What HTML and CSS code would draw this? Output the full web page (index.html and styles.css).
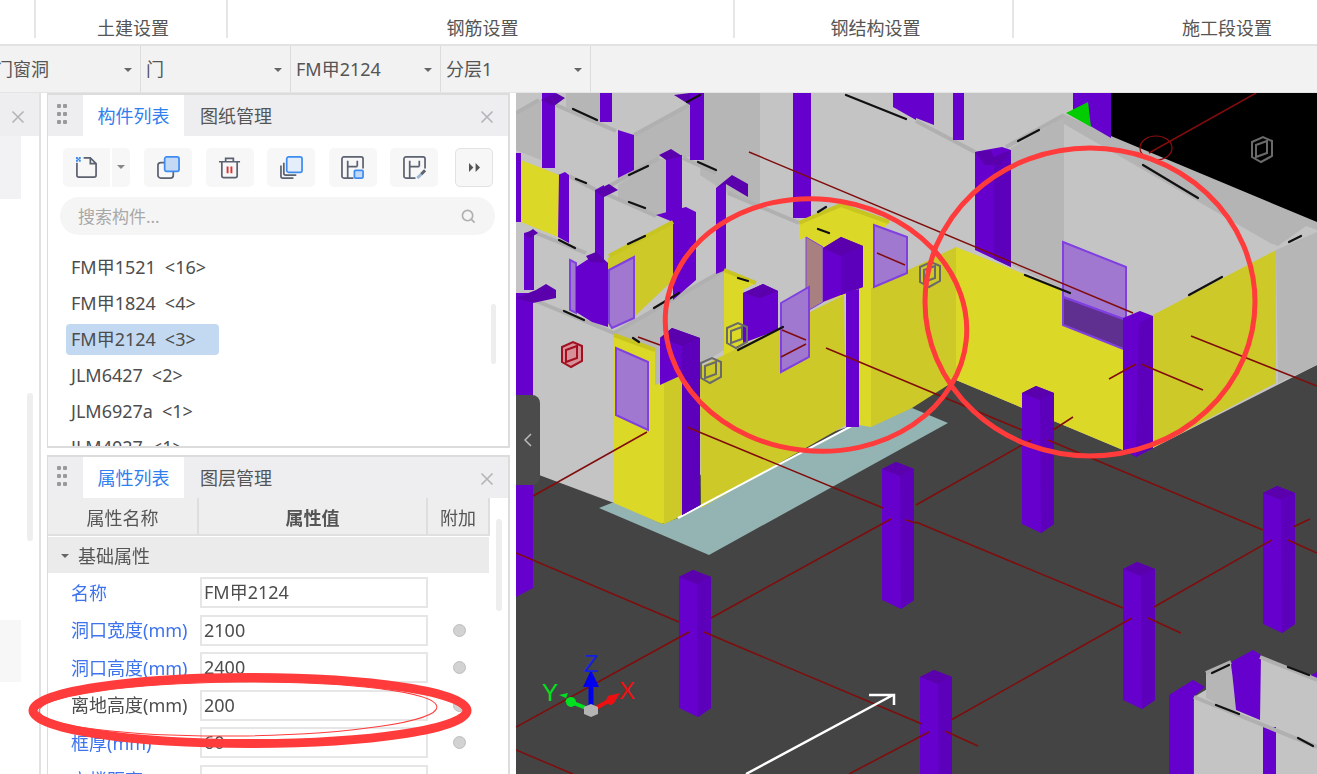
FILE: index.html
```html
<!DOCTYPE html>
<html lang="zh">
<head>
<meta charset="utf-8">
<title>门窗洞属性</title>
<link rel="stylesheet" href="styles.css">
</head>
<body>
<div class="app">
  <header class="ribbon">
    <div class="group g0"></div>
    <div class="group g1"><span>土建设置</span></div>
    <div class="group g2"><span>钢筋设置</span></div>
    <div class="group g3"><span>钢结构设置</span></div>
    <div class="group g4"><span>施工段设置</span></div>
  </header>
  <nav class="pickers">
    <div class="picker first"><span>门窗洞</span><i class="caret"></i></div>
    <div class="picker"><span>门</span><i class="caret"></i></div>
    <div class="picker"><span>FM甲2124</span><i class="caret"></i></div>
    <div class="picker"><span>分层1</span><i class="caret"></i></div>
  </nav>
  <main class="work">
    <aside class="stub">
      <div class="stub-head"><svg class="close" viewBox="0 0 14 14"><path d="M1.5 1.5l11 11M12.500 1.500l-11 11"/></svg></div>
      <div class="stub-body">
        <div class="stub-block one"></div>
        <div class="stub-scroll"></div>
        <div class="stub-block two"></div>
      </div>
    </aside>
    <section class="panels">
      <div class="panel list-panel">
        <div class="tabs">
          <div class="grip"><b></b><b></b><b></b><b></b><b></b><b></b></div>
          <div class="tab active">构件列表</div>
          <div class="tab">图纸管理</div>
          <svg class="close" viewBox="0 0 14 14"><path d="M1.5 1.5l11 11M12.500 1.500l-11 11"/></svg>
        </div>
        <div class="tools">
          <div class="split">
            <button class="tool main">
              <svg viewBox="0 0 24 24"><path class="ln" d="M2 7v13a2 2 0 0 0 2 2h16a2 2 0 0 0 2-2V8l-6-6H9M16 2v6h6"/><path class="bl" d="M1 1h2v2H1zM4 1h2v2H4zM1 4h2v2H1zM4 4h2v2H4zM2.500 2.500h2v2h-2z"/></svg>
            </button>
            <button class="tool drop"><i class="caret"></i></button>
          </div>
          <button class="tool">
            <svg viewBox="0 0 24 24"><rect class="ln" x="1" y="7" width="16" height="16" rx="3"/><rect class="fillb" x="8" y="1" width="15" height="15" rx="2"/></svg>
          </button>
          <button class="tool">
            <svg viewBox="0 0 24 24"><path class="ln" d="M1 6h22M8 6V2.500h8V6M4 6v14.500a2 2 0 0 0 2 2h12a2 2 0 0 0 2-2V6"/><path class="rd" d="M10 11v7M14 11v7"/></svg>
          </button>
          <button class="tool">
            <svg viewBox="0 0 24 24"><path class="ln" d="M1 10v11a2 2 0 0 0 2 2h11M4 7v11a2 2 0 0 0 2 2h11"/><rect class="filll" x="7" y="1" width="16" height="16" rx="2"/></svg>
          </button>
          <button class="tool">
            <svg viewBox="0 0 24 24"><path class="ln" d="M13 23H3a2 2 0 0 1-2-2V3a2 2 0 0 1 2-2h18a2 2 0 0 1 2 2v10M7 23V5M7 11h10M17 5v6"/><rect class="fillb" x="14" y="15" width="9" height="8" rx="1"/></svg>
          </button>
          <button class="tool">
            <svg viewBox="0 0 24 24"><path class="ln" d="M13 23H3a2 2 0 0 1-2-2V3a2 2 0 0 1 2-2h18a2 2 0 0 1 2 2v10M7 23V5M7 11h10M17 5v6"/><path class="pen" d="M15 23l4-4"/><path class="pendk" d="M19 19l4-4"/></svg>
          </button>
          <button class="tool more">
            <svg viewBox="0 0 10 8"><path class="solid" d="M0 0l4 4-4 4zM6 0l4 4-4 4z"/></svg>
          </button>
        </div>
        <div class="search">
          <span>搜索构件...</span>
          <svg viewBox="0 0 16 16"><circle cx="7" cy="7" r="5.500"/><path d="M11 11l3.500 3.500"/></svg>
        </div>
        <ul class="items">
          <li><span class="item">FM甲1521<em>&lt;16&gt;</em></span></li>
          <li><span class="item">FM甲1824<em>&lt;4&gt;</em></span></li>
          <li><span class="item sel">FM甲2124<em>&lt;3&gt;</em></span></li>
          <li><span class="item">JLM6427<em>&lt;2&gt;</em></span></li>
          <li><span class="item">JLM6927a<em>&lt;1&gt;</em></span></li>
          <li><span class="item">JLM4027<em>&lt;1&gt;</em></span></li>
        </ul>
        <div class="list-scroll"></div>
      </div>
      <div class="panel prop-panel">
        <div class="tabs">
          <div class="grip"><b></b><b></b><b></b><b></b><b></b><b></b></div>
          <div class="tab active">属性列表</div>
          <div class="tab">图层管理</div>
          <svg class="close" viewBox="0 0 14 14"><path d="M1.5 1.5l11 11M12.500 1.500l-11 11"/></svg>
        </div>
        <div class="thead">
          <div class="th c1">属性名称</div>
          <div class="th c2">属性值</div>
          <div class="th c3">附加</div>
        </div>
        <div class="grouprow"><i class="caret"></i>基础属性</div>
        <div class="row"><label class="blue">名称</label><div class="val">FM甲2124</div></div>
        <div class="row"><label class="blue">洞口宽度(mm)</label><div class="val">2100</div><i class="dot"></i></div>
        <div class="row"><label class="blue">洞口高度(mm)</label><div class="val">2400</div><i class="dot"></i></div>
        <div class="row"><label>离地高度(mm)</label><div class="val">200</div><i class="dot"></i></div>
        <div class="row"><label class="blue">框厚(mm)</label><div class="val">60</div><i class="dot"></i></div>
        <div class="row"><label class="blue">立樘距离(mm)</label><div class="val">0</div><i class="dot"></i></div>
        <div class="prop-scroll"></div>
      </div>
    </section>
    <section class="view">
      <svg class="scene" viewBox="516 93 801 681" width="801" height="681">
        <defs>
          <g id="post">
            <path class="pf" d="M0 7L14 0 32 7V138L19 147 0 138z"/>
            <path class="pr" d="M18 14L32 7V138L19 147z"/>
            <path class="pt" d="M0 7L14 0 32 7 18 14z"/>
          </g>
          <g id="frame">
            <path d="M0 5L11 0 20 4V19L9 25 0 20zM4 8L15 4V16L4 20z"/>
          </g>
        </defs>
        <rect class="floor" x="516" y="93" width="801" height="681"/>
        <path class="night" d="M1100 93H1317V232L1100 138z"/>
        <path class="wall" d="M516 93H1111V138L1317 225V365L1153 448 1123 450 956 380 900 410 614 503 539 475 516 465z"/>
        <path class="slab" d="M599 508L614 502 662 524 678 518 859 422 912 408 948 423 709 555z"/>

        <path class="shade" d="M516 113L541 100V160L516 150zM566 93H600V122L566 107zM634 135L693 100V157H659L630 173zM618 185L659 158 666 160V216H656L618 199zM614 332L724 270V350L700 365 660 395 614 370zM704 93H760V207L727 193 700 175zM1011 148L1064 117V290L1011 265zM1276 250L1317 232V365L1278 383z"/>
        <path class="caps" d="M516 113L539 100M556 105L616 131M634 135L689 105M606 188L659 158M683 158L716 173M569 176L596 190M604 193L656 216M536 233L586 253M534 300L614 333 724 270M728 193L799 223M916 121L975 152M1006 147L1064 115"/>
        <path class="capfill" d="M1064 114L1111 136 1317 222V230L1306 226 1278 246 1270 243 1064 124z"/>

        <path class="p" d="M542 93H555V168H542zM600 93H612V122H600zM690 93H704V160H690zM793 93H811V218H793zM893 93H916V120L893 107zM916 93H934V125L916 118zM953 93H964V140H953zM1073 93H1111V138L1092 127 1073 110zM516 153H521V222H516zM558 175L565 172 569 175V243L558 237zM595 190L604 185V262H595zM666 155H682V215H666zM716 188L726 182V270L716 274zM524 233L534 230V290L524 290zM618 130L634 135V170L618 178z"/>
        <path class="pt" d="M541 100L556 93 565 98 554 106zM595 191L609 184 618 190 604 197zM659 155L671 149 682 156 666 160zM716 188L732 175 748 184 748 197 726 184zM674 95L690 93 690 105zM524 235L533 229 538 233 530 238z"/>
        <path class="pf" d="M656 215L686 207 696 212V280L673 300V222z"/>

        <path class="yl" d="M521 160L559 175 558 237 521 222z"/>
        <path class="yd" d="M608 258L673 222V280L634 317 608 325z"/>
        <path class="yl" d="M724 270L756 283 743 290V343L724 357z"/>
        <path class="yd" d="M700 367L844 295 846 425 701 508z"/>
        <path class="yl" d="M799 223L841 205 889 222 884 228 873 225V287L859 290V427L846 427 845 295 823 302V248L806 237 799 240z"/>
        <path class="yl" d="M859 290L871 287V427L859 425z"/>
        <path class="yd" d="M871 288L956 247V380L912 408 871 427z"/>
        <path class="yl" d="M956 247L1123 313V450L956 380z"/>
        <path class="yd" d="M1153 315L1276 250V383L1153 448z"/>
        <path class="yl" d="M614 335L655 350V385L680 375V516L662 524 614 503z"/>
        <path class="yd" d="M664 382L682 375V516L664 524z"/>
        <path class="ycap" d="M614 335L655 350M799 223L841 205 889 222M609 256L673 222M724 270L756 283"/>

        <path class="white" d="M678 518L859 422"/>

        <path class="pink" d="M806 237L823 247V302L809 310V287L806 290z"/>
        <path class="door" d="M616 348L648 362V430L616 415zM781 303L809 287V357L781 372zM874 225L907 237V273L874 287zM609 270L634 257V318L612 328 609 323zM570 260L576 263V313L570 310z"/>
        <path class="door" d="M1063 242L1126 267V320L1063 297z"/>
        <path class="doorlow" d="M1063 297L1126 320V350L1063 325z"/>

        <path class="pf" d="M576 267L590 258 608 263V327L592 322 576 312z"/>
        <path class="pt" d="M586 256L596 252 608 263 590 262z"/>
        <path class="pf" d="M743 293L763 284 778 291V330L743 343z"/>
        <path class="pt" d="M743 293L763 284 778 291 760 298z"/>
        <path class="pf" d="M823 248L841 237 863 246V287L841 295 823 302z"/>
        <path class="pr" d="M841 256L863 246V287L841 295z"/>
        <path class="pt" d="M823 248L841 237 863 246 841 256z"/>
        <path class="p" d="M846 292L859 289V427L846 427z"/>
        <path class="pf" d="M660 338L672 328 700 338V505L682 515V375L660 385z"/>
        <path class="pr" d="M682 346L700 338V505L682 515z"/>
        <path class="pt" d="M660 338L672 328 700 338 682 346z"/>
        <path class="pf" d="M975 152L985 150 1002 147 1011 150V267L975 250z"/>
        <path class="pr" d="M994 157L1011 150V267L994 259z"/>
        <path class="pt" d="M975 152L990 150 994 157 1011 150 1000 165 985 165z"/>
        <path class="pf" d="M1123 318L1140 311 1153 316V448L1136 457 1123 450z"/>
        <path class="pr" d="M1139 323L1153 316V448L1136 457z"/>
        <path class="pf" d="M516 293L533 293V588L516 597z"/>
        <path class="pt" d="M516 298L536 290 546 284 556 290V298L533 303z"/>
        <path class="green" d="M1066 113L1088 102 1091 127z"/>

        <use href="#post" x="679" y="570"/>
        <use href="#post" x="882" y="462"/>
        <use href="#post" x="1022" y="386"/>
        <use href="#post" x="1263" y="486"/>
        <use href="#post" x="1123" y="562"/>
        <use href="#post" x="920" y="670"/>

        <path class="wall" d="M1194 697L1260 657 1317 677V774H1194z"/>
        <path class="shade" d="M1206 673L1231 662 1236 713 1206 698z"/>
        <path class="p" d="M1231 662L1253 650 1261 655 1260 720 1236 710zM1169 695L1193 680 1205 687 1193 697V774H1169zM1263 727H1276V774H1263zM1308 677L1317 672V680z"/>
        <path class="caps" d="M1194 697L1317 747M1260 657L1317 680M1206 673L1231 662"/>

        <g class="frame-g"><use href="#frame" x="701" y="358"/><use href="#frame" x="727" y="323"/><use href="#frame" x="920" y="262"/><use href="#frame" x="1252" y="137"/></g>
        <g class="frame-r"><use href="#frame" x="562" y="342"/></g>

        <path class="dash" d="M573 109L597 120M629 175L648 166M698 162L716 170M629 202L645 208M559 240L575 248M576 179L586 183M628 244L645 236M564 311L584 320M654 308L679 293M738 278L748 281M633 338L639 342M738 350L783 327M818 212L826 207M818 229L829 233M846 95L906 119M687 102L700 95M1018 141L1039 130M1143 165L1198 198M1025 275L1070 293M1189 295L1222 277M1289 242L1301 236M1212 673L1229 665M1216 705L1239 714M1288 667L1309 675M1298 738L1313 746"/>

        <path class="red" d="M749 152L1133 313M1256 93L1149 153M1191 336L1317 386M1109 379L1136 364M1141 364L1203 390M826 348L1022 430M1048 440L1263 530M1288 540L1317 553M916 505L1031 440M1053 430L1073 417M516 727L689 632M711 618L891 519M516 553L679 622M704 632L922 724M945 731L978 746M916 522L1123 608M1148 618L1181 633M1154 607L1272 540M1293 527L1310 519M1132 618L951 720M929 732L849 774M687 427L883 508M906 520L916 523M533 496L647 432M516 750L573 774M782 330L806 340M781 357L806 344M877 253L905 265M638 337L660 345"/>
        <ellipse class="redthin" cx="1156" cy="148" rx="16" ry="12"/>

        <path class="arrow" d="M746 774L893 695M869 695H894V705"/>

        <g class="gizmo">
          <path class="axg" d="M586 708L566 700"/>
          <path class="gh" d="M566 698L559 695 568 693zM571 707a5 5 0 1 1 0-10 5 5 0 0 1 0 10z"/>
          <path class="axr" d="M596 708L612 699"/>
          <path class="rh" d="M611 705a5 5 0 1 1 1-10l8-2-6 10z"/>
          <path class="axb" d="M591 706V682"/>
          <path class="bh" d="M591 670L599 687H583z"/>
          <path class="cube" d="M584 707L591 704 598 707V714L591 717 584 714z"/>
          <text class="z" x="591" y="672">Z</text>
          <text class="y" x="550" y="701">Y</text>
          <text class="x" x="627" y="699">X</text>
        </g>
      </svg>
      <div class="fold"><svg viewBox="0 0 8 14"><path d="M7 1L1 7l6 6"/></svg></div>
    </section>
  </main>
  <svg class="marks" viewBox="0 0 1317 774" width="1317" height="774">
    <ellipse class="mark" cx="816" cy="325" rx="151" ry="126" transform="rotate(6 816 325)"/>
    <ellipse class="mark" cx="1090" cy="302" rx="165" ry="154"/>
    <ellipse class="mark wide" cx="250" cy="710.500" rx="217" ry="33"/>
    <ellipse class="mark thin" cx="238" cy="709" rx="199" ry="27"/>
  </svg>
</div>
</body>
</html>
```
FILE: styles.css
```css
* { box-sizing: border-box; }
html, body { margin: 0; padding: 0; background: #fff; }
body {
  width: 1317px; height: 774px; overflow: hidden;
  font: 18px/1 "Noto Sans", "Noto Sans CJK SC", sans-serif;
  color: #4d4d4d;
}
.app { position: relative; width: 1317px; height: 774px; overflow: hidden; filter: blur(.45px); }

.ribbon { display: flex; height: 46px; border-bottom: 2px solid #e2e2e2; background: #fff; }
.group { position: relative; flex: none; height: 44px; padding: 19px 0 0 2px; text-align: center; white-space: nowrap; color: #555; }
.group::after { content: ""; position: absolute; right: 0; top: 0; height: 38px; width: 2px; background: #e6e6e6; }
.g0 { width: 36px; }
.g1 { width: 192px; }
.g2 { width: 507px; }
.g3 { width: 279px; }
.g4 { width: 424px; }

.pickers { display: flex; height: 47px; background: #f2f2f2; border-bottom: 1px solid #e4e4e4; }
.picker { position: relative; flex: none; width: 150px; height: 46px; padding: 14px 0 0 5px; border-right: 1px solid #dcdcdc; color: #555; }
.picker.first { width: 141px; padding-left: 0; }
.picker.first span { margin-left: -5px; }
.picker .caret { position: absolute; right: 8px; top: 22px; }
.caret { display: inline-block; width: 0; height: 0; border: 4px solid transparent; border-top: 4px solid #666; border-bottom: 0; }

.work { display: flex; height: 681px; }
.stub { flex: none; width: 41px; border-right: 2px solid #e2e2e2; }
.stub-head { height: 43px; background: #eeeef0; padding: 15px 0 0 11px; }
.stub-head .close { position: static; }
.stub-body { position: relative; height: 638px; background: #fff; }
.stub-block { width: 21px; }
.stub-block.one { height: 63px; background: #f2f2f5; }
.stub-block.two { height: 62px; background: #f7f7f7; margin-top: 421px; }
.stub-scroll { position: absolute; left: 27px; top: 257px; width: 6px; height: 148px; background: #eee; border-radius: 3px; }
.close { position: absolute; right: 14px; top: 15px; width: 14px; height: 14px; }
.close path { fill: none; stroke: #b4b4b8; stroke-width: 1.6; }

.panels { flex: none; width: 463px; margin: 0 6px 0 6px; display: flex; flex-direction: column; gap: 7px; }
.panel { position: relative; border: solid #dcdcdc; border-width: 2px 2px 2px 1px; background: #fff; overflow: hidden; }
.list-panel { height: 355px; flex: none; }
.prop-panel { flex: 1; border-bottom: 0; }

.tabs { position: relative; display: flex; height: 41px; background: #eeeef0; }
.grip { width: 35px; padding: 9px 0 0 9px; display: grid; grid-template-columns: 4px 4px; gap: 4px 2px; align-content: start; }
.grip b { width: 4px; height: 4px; background: #9a9a9a; border-radius: 1px; }
.tab { width: 101px; height: 41px; padding-top: 12px; text-align: center; color: #555; }
.tab.active { background: #fff; color: #2f7fee; }
.tab + .tab { width: 104px; }

.tools { display: flex; align-items: center; gap: 13.500px; height: 52px; padding: 10px 0 0 15px; }
.tool { flex: none; width: 48px; height: 39px; padding: 0; border: 0; border-radius: 5px; background: #f7f7f7; display: flex; align-items: center; justify-content: center; }
.tool svg { width: 23px; height: 23px; }
.split { display: flex; gap: 2px; flex: none; margin-right: .5px; }
.tool.main { width: 47px; border-radius: 5px 0 0 5px; }
.tool.drop { width: 18px; border-radius: 0 5px 5px 0; }
.tool.drop .caret { border-top-color: #888; }
.tool.more { width: 38px; margin-left: 3.500px; border: 1px solid #e2e2e2; }
.tool.more svg { width: 11px; height: 9px; }
.ln { fill: none; stroke: #5c6270; stroke-width: 1.800; }
.bl { fill: #3f8cf0; }
.rd { fill: none; stroke: #e03030; stroke-width: 2; }
.fillb { fill: #c4d9f4; stroke: #3f8cf0; stroke-width: 1.800; }
.filll { fill: #e4eefb; stroke: #3f8cf0; stroke-width: 1.800; }
.pen { fill: none; stroke: #9ab4d8; stroke-width: 3; }
.pendk { fill: none; stroke: #5c6270; stroke-width: 3; }
.solid { fill: #555; }

.search { position: relative; display: flex; align-items: center; height: 38px; margin: 9px 13px 0 12px; padding-left: 18px; border-radius: 19px; background: #f5f5f5; color: #a8a8a8; font-size: 17px; }
.search svg { position: absolute; right: 19px; top: 12px; width: 15px; height: 15px; fill: none; stroke: #b0b0b0; stroke-width: 1.800; }

.items { list-style: none; margin: 0; padding: 14px 0 0 18px; }
.items li { height: 36px; display: flex; align-items: center; }
.item { display: inline-block; height: 31px; line-height: 31px; padding: 0 0 0 5px; border-radius: 4px; white-space: nowrap; color: #4d4d4d; }
.item em { font-style: normal; margin-left: 9px; }
.item.sel { width: 153px; background: #c2d9f1; }
.list-scroll { position: absolute; left: 443px; top: 209px; width: 5px; height: 60px; background: #eee; border-radius: 3px; }

.thead { display: flex; height: 38px; background: #eee; width: 442px; border-bottom: 2px solid #e0e0e0; }
.th { padding-top: 11px; text-align: center; color: #555; border-right: 2px solid #dedede; }
.th.c1 { width: 151px; }
.th.c2 { width: 229px; font-weight: 700; }
.th.c3 { width: 62px; }
.grouprow { display: flex; align-items: center; gap: 9px; width: 441px; height: 36px; margin-top: 1px; padding: 2px 0 0 13px; background: #ebebeb; color: #555; }
.row { position: relative; display: flex; align-items: center; height: 37.500px; padding-left: 23px; }
.grouprow + .row { margin-top: 1px; }
.row label { width: 129px; white-space: nowrap; color: #4d4d4d; }
.row label.blue { color: #3d73ee; }
.val { width: 228px; height: 31px; padding: 2px 0 0 2px; border: 2px solid #e6e6e6; background: #fff; line-height: 22px; color: #4d4d4d; }
.dot { position: absolute; left: 405px; top: 12px; width: 13px; height: 13px; border-radius: 50%; background: #d2d2d2; border: 1px solid #bdbdbd; }
.prop-scroll { position: absolute; left: 448px; top: 62px; width: 6px; height: 92px; background: #eee; border-radius: 3px; }

.view { position: relative; flex: none; width: 801px; height: 681px; overflow: hidden; }
.scene { display: block; }
.fold { position: absolute; left: 0; top: 302px; width: 24px; height: 90px; background: #4b4b4b; border-radius: 0 8px 8px 0; display: flex; align-items: center; justify-content: center; }
.fold svg { width: 8px; height: 14px; fill: none; stroke: #bbb; stroke-width: 1.500; }

.floor { fill: #444; }
.night { fill: #000; }
.wall { fill: #c4c4c4; }
.shade { fill: #b6b6b6; }
.slab { fill: #94b4b4; }
.caps { fill: none; stroke: #b0b0b0; stroke-width: 4; }
.capfill { fill: #b4b4b4; }
.p, .pf { fill: #6600cc; }
.pr { fill: #5c00bb; }
.pt { fill: #5a00ad; }
.yl { fill: #dcd828; }
.yd { fill: #cdc928; }
.ycap { fill: none; stroke: #c8c420; stroke-width: 4; }
.white { fill: none; stroke: #fff; stroke-width: 2; }
.door { fill: #a078d0; stroke: #8040e0; stroke-width: 2; }
.doorlow { fill: #603090; stroke: #8040e0; stroke-width: 2; }
.pink { fill: #a88080; stroke: #8040e0; stroke-width: 1; }
.green { fill: #00cc00; }
.frame-g { fill: none; stroke: #6a6a6a; stroke-width: 2; }
.frame-r { fill: #d89098; stroke: #a01020; stroke-width: 2; }
.dash { fill: none; stroke: #111; stroke-width: 2.200; stroke-linecap: round; }
.red { fill: none; stroke: #800c0c; stroke-width: 1.500; }
.redthin { fill: none; stroke: #900c0c; stroke-width: 1.200; }
.arrow { fill: none; stroke: #fff; stroke-width: 2.500; }
.axg { stroke: #00e020; stroke-width: 4; }
.gh { fill: #00e020; }
.axr { stroke: #ee1010; stroke-width: 4; }
.rh { fill: #ee1010; }
.axb { stroke: #0000ee; stroke-width: 5; }
.bh { fill: #0000ee; }
.cube { fill: #b4b4b4; }
.gizmo text { font: 24px "Liberation Sans", sans-serif; text-anchor: middle; }
.z { fill: #1420e0; }
.y { fill: #00e020; }
.x { fill: #ee1010; }

.marks { position: absolute; left: 0; top: 0; pointer-events: none; }
.mark { fill: none; stroke: #ff3b3b; stroke-width: 5; }
.mark.wide { stroke-width: 9; }
.mark.thin { stroke-width: 1; transform: rotate(-.6deg); transform-origin: 238px 709px; }
```
